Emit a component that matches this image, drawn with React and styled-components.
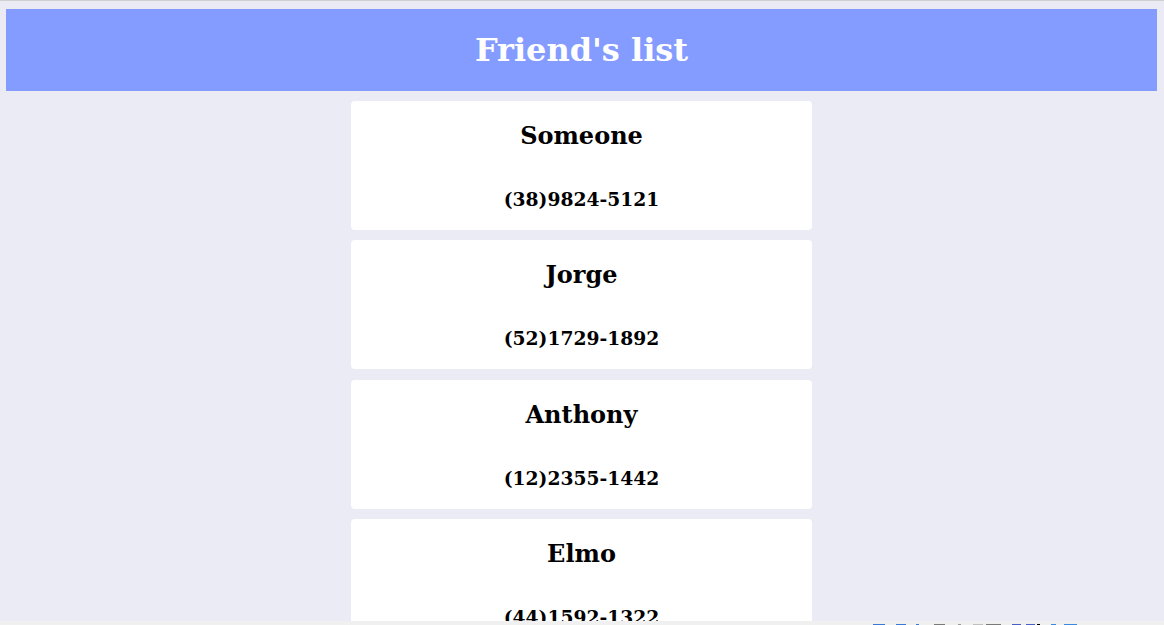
import React from 'react';
import styled, { createGlobalStyle } from 'styled-components';

const GlobalStyle = createGlobalStyle`
  html, body {
    margin: 0;
    padding: 0;
    background-color: #ebebf5;
    font-family: "DejaVu Serif", serif;
    overflow: hidden;
  }
`;

const Page = styled.div`
  border-top: 1px solid #cfcfd4;
  padding: 8px 7px 0 6px;
  height: 625px;
  box-sizing: border-box;
`;

const Header = styled.header`
  display: flex;
  justify-content: center;
  background-color: #849cff;
  color: #ffffff;
`;

const Title = styled.h1`
  font-size: 32px;
  margin: 22px 0;
`;

const List = styled.ul`
  list-style: none;
  margin: 10px 0 0;
  padding: 0;
  display: flex;
  flex-direction: column;
  align-items: center;
  gap: 10.55px;
`;

const Card = styled.li`
  width: 461px;
  background-color: #ffffff;
  border-radius: 4px;
  display: flex;
  flex-direction: column;
  align-items: center;
  color: #000000;
`;

const Name = styled.h2`
  font-size: 24px;
  margin: 20px 0 19px;
`;

const Phone = styled.h3`
  font-size: 18.72px;
  margin: 18.72px 0 20.2px;
`;

const Taskbar = styled.div`
  position: fixed;
  left: 0;
  right: 0;
  bottom: 0;
  height: 4px;
  background-color: #f0f0f0;
`;

const Glyph = styled.span`
  position: absolute;
  bottom: 0;
  height: 1px;
  background-color: ${(p) => p.color};
`;

const friends = [
  { name: 'Someone', phone: '(38)9824-5121' },
  { name: 'Jorge', phone: '(52)1729-1892' },
  { name: 'Anthony', phone: '(12)2355-1442' },
  { name: 'Elmo', phone: '(44)1592-1322' },
];

const glyphs = [
  [873, 12, '#3a78d8'],
  [896, 10, '#3a78d8'],
  [916, 3, '#3a78d8'],
  [934, 11, '#7a7a7a'],
  [958, 3, '#9a9a9a'],
  [973, 10, '#c0c0c0'],
  [986, 15, '#7a7a7a'],
  [1012, 9, '#4a5ec8'],
  [1026, 9, '#4a5ec8'],
  [1037, 3, '#000000'],
  [1051, 5, '#3a88e0'],
  [1064, 13, '#3a88e0'],
];

function App() {
  return (
    <>
      <GlobalStyle />
      <Page>
        <Header>
          <Title>Friend's list</Title>
        </Header>
        <List>
          {friends.map((f) => (
            <Card key={f.name}>
              <Name>{f.name}</Name>
              <Phone>{f.phone}</Phone>
            </Card>
          ))}
        </List>
      </Page>
      <Taskbar>
        {glyphs.map(([x, w, c]) => (
          <Glyph key={x} color={c} style={{ left: x, width: w }} />
        ))}
      </Taskbar>
    </>
  );
}

export default App;
